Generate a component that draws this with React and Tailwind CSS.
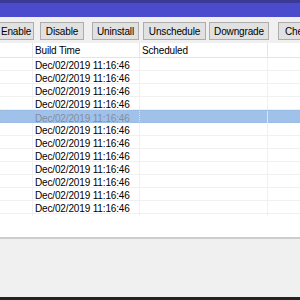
import React from "react";

const rows = Array.from({ length: 12 }, (_, i) => i);

const buttons = [
  { label: "Enable", w: "w-[36px]", ml: "ml-[-2px]" },
  { label: "Disable", w: "w-[44px]", ml: "ml-[6px]" },
  { label: "Uninstall", w: "w-[47px]", ml: "ml-[8px]" },
  { label: "Unschedule", w: "w-[63px]", ml: "ml-[4px]" },
  { label: "Downgrade", w: "w-[60px]", ml: "ml-[3px]" },
];

const App = () => {
  return (
    <div
      className="w-[300px] h-[300px] overflow-hidden flex flex-col bg-white text-[10px] tracking-[-0.15px] text-black"
      style={{ fontFamily: '"Liberation Sans", Arial, sans-serif' }}
    >
      <div className="h-[3px] shrink-0 bg-[#3a3a96]" />
      <div className="h-[14px] shrink-0 bg-[#4b4bcd]" />

      {/* toolbar */}
      <div className="h-[26px] shrink-0 bg-[#f0f0f0] flex items-start pt-[5px] whitespace-nowrap overflow-hidden">
        {buttons.map((b) => (
          <div
            key={b.label}
            className={`${b.w} ${b.ml} shrink-0 h-[18px] border border-[#adadad] bg-[#e1e1e1] flex items-center justify-center overflow-hidden`}
          >
            {b.label}
          </div>
        ))}
        <div className="ml-[9px] w-[22px] shrink-0 h-[18px] border border-r-0 border-[#adadad] bg-[#e1e1e1] flex items-center pl-[6px] overflow-hidden">
          Che
        </div>
      </div>

      {/* list */}
      <div className="flex-1 flex flex-col bg-white">
        <div className="grid grid-cols-[33px_107px_128px_1fr] h-[15px] border-b border-[#e5e5e5] shrink-0">
          <div className="border-r border-[#e5e5e5]" />
          <div className="border-r border-[#e5e5e5] pl-[2px] flex items-center">Build Time</div>
          <div className="border-r border-[#e5e5e5] pl-[2px] flex items-center">Scheduled</div>
          <div />
        </div>
        {rows.map((i) => {
          const sel = i === 4;
          return (
            <div
              key={i}
              className={`grid grid-cols-[33px_107px_128px_1fr] h-[13px] shrink-0 ${
                sel
                  ? "bg-[#9fc1ea] text-[#858f9c] border-y border-dotted border-[#a9b4c2]"
                  : "border-b border-[#f0f0f0]"
              }`}
            >
              <div className={sel ? "" : "border-r border-[#f0f0f0]"} />
              <div className={`pl-[2px] flex items-center ${sel ? "border-r border-dotted border-[#d8e4f4]" : "border-r border-[#f0f0f0]"}`}>
                Dec/02/2019 11:16:46
              </div>
              <div className={sel ? "border-r border-[#d8e4f4]" : "border-r border-[#f0f0f0]"} />
              <div />
            </div>
          );
        })}
        <div className="flex-1" />
      </div>

      <div className="h-[2px] shrink-0 bg-[#cdcdcd]" />
      <div className="h-[58px] shrink-0 bg-[#f0f0f0]" />
      <div className="h-[3px] shrink-0 bg-[#222222]" />
    </div>
  );
};

export default App;
